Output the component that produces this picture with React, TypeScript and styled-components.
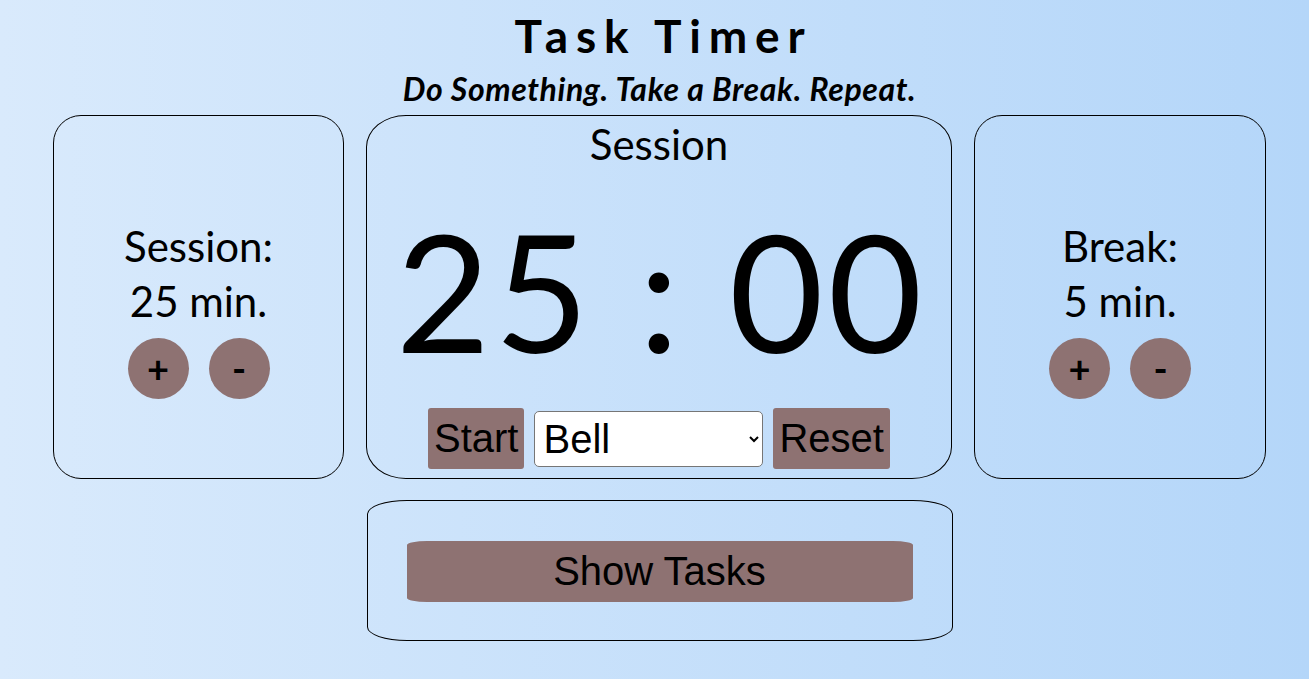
import React from "react";
import styled, { createGlobalStyle } from "styled-components";

const GlobalStyle = createGlobalStyle`
  html, body {
    margin: 0;
    padding: 0;
  }
  body {
    min-height: 100vh;
    background: linear-gradient(to right, #d9eafc 0%, #b4d6f9 100%);
    font-family: Lato, "Noto Sans", sans-serif;
    color: #000;
  }
  * { box-sizing: border-box; }
`;

const Page = styled.main`
  width: 1213px;
  margin-left: 53px;
  display: flex;
  flex-direction: column;
  align-items: center;
  min-height: 679px;
`;

const Title = styled.h1`
  margin: 8px 0 0;
  font-family: Lato, sans-serif;
  font-weight: 700;
  font-size: 46px;
  line-height: 55px;
  letter-spacing: 0.17em;
  padding-left: 0.17em;
`;

const Subtitle = styled.h2`
  margin: 9px 0 0;
  font-family: Lato, sans-serif;
  font-weight: 700;
  font-style: italic;
  font-size: 32px;
  line-height: 34px;
  letter-spacing: 0.6px;
`;

const Cards = styled.section`
  margin-top: 9px;
  display: grid;
  grid-template-columns: 291px 586px 292px;
  column-gap: 22px;
  width: 100%;
`;

const SideCard = styled.div`
  height: 364px;
  border: 1px solid #000;
  border-radius: 28px;
  padding-top: 24px;
  display: flex;
  flex-direction: column;
  align-items: center;
  justify-content: center;
`;

const SideLine = styled.div`
  font-size: 42px;
  line-height: 55px;
  font-weight: 400;
`;

const Circles = styled.div`
  margin-top: 9px;
  display: flex;
  gap: 20px;
`;

const CircleButton = styled.button`
  width: 61px;
  height: 61px;
  border-radius: 50%;
  border: none;
  padding: 0;
  background: #8e7272;
  font-family: Lato, sans-serif;
  font-weight: 700;
  font-size: 38px;
  line-height: 61px;
  color: #000;
  display: flex;
  align-items: center;
  justify-content: center;
`;

const TimerCard = styled.div`
  height: 364px;
  border: 1px solid #000;
  border-radius: 40px / 32px;
  padding-top: 3px;
  display: flex;
  flex-direction: column;
  align-items: center;
`;

const TimerHeading = styled.div`
  font-size: 42px;
  line-height: 50px;
`;

const TimerDigits = styled.div`
  margin-top: 18px;
  font-size: 163px;
  line-height: 206px;
  letter-spacing: 4px;
  padding-left: 4px;
  white-space: pre;
`;

const Controls = styled.div`
  margin-top: 15px;
  display: flex;
  align-items: center;
  gap: 10px;
`;

const RectButton = styled.button`
  height: 61px;
  padding: 0 6px;
  border: none;
  border-radius: 3px;
  background: #8e7272;
  font-family: "Liberation Sans", Arial, sans-serif;
  font-size: 40px;
  color: #000;
`;

const SoundSelect = styled.select`
  width: 229px;
  height: 56px;
  padding: 0 4px;
  border: 1px solid #767676;
  border-radius: 5px;
  background: #fff;
  font-family: "Liberation Sans", Arial, sans-serif;
  font-size: 40px;
  color: #000;
`;

const TasksCard = styled.div`
  margin-top: 21px;
  width: 586px;
  height: 141px;
  border: 1px solid #000;
  border-radius: 40px / 14px;
  padding: 40px 39px;
`;

const WideButton = styled.button`
  width: 100%;
  height: 61px;
  border: none;
  border-radius: 20px / 4px;
  background: #8e7272;
  font-family: "Liberation Sans", Arial, sans-serif;
  font-size: 40px;
  color: #000;
`;

function Adjuster({ label, value }: { label: string; value: string }) {
  return (
    <SideCard>
      <SideLine>{label}</SideLine>
      <SideLine>{value}</SideLine>
      <Circles>
        <CircleButton>+</CircleButton>
        <CircleButton>-</CircleButton>
      </Circles>
    </SideCard>
  );
}

export default function App() {
  return (
    <>
      <GlobalStyle />
      <Page>
        <Title>Task Timer</Title>
        <Subtitle>Do Something. Take a Break. Repeat.</Subtitle>
        <Cards>
          <Adjuster label="Session:" value="25 min." />
          <TimerCard>
            <TimerHeading>Session</TimerHeading>
            <TimerDigits>25 : 00</TimerDigits>
            <Controls>
              <RectButton>Start</RectButton>
              <SoundSelect defaultValue="Bell">
                <option>Bell</option>
                <option>Chime</option>
                <option>Beep</option>
              </SoundSelect>
              <RectButton>Reset</RectButton>
            </Controls>
          </TimerCard>
          <Adjuster label="Break:" value="5 min." />
        </Cards>
        <TasksCard>
          <WideButton>Show Tasks</WideButton>
        </TasksCard>
      </Page>
    </>
  );
}
